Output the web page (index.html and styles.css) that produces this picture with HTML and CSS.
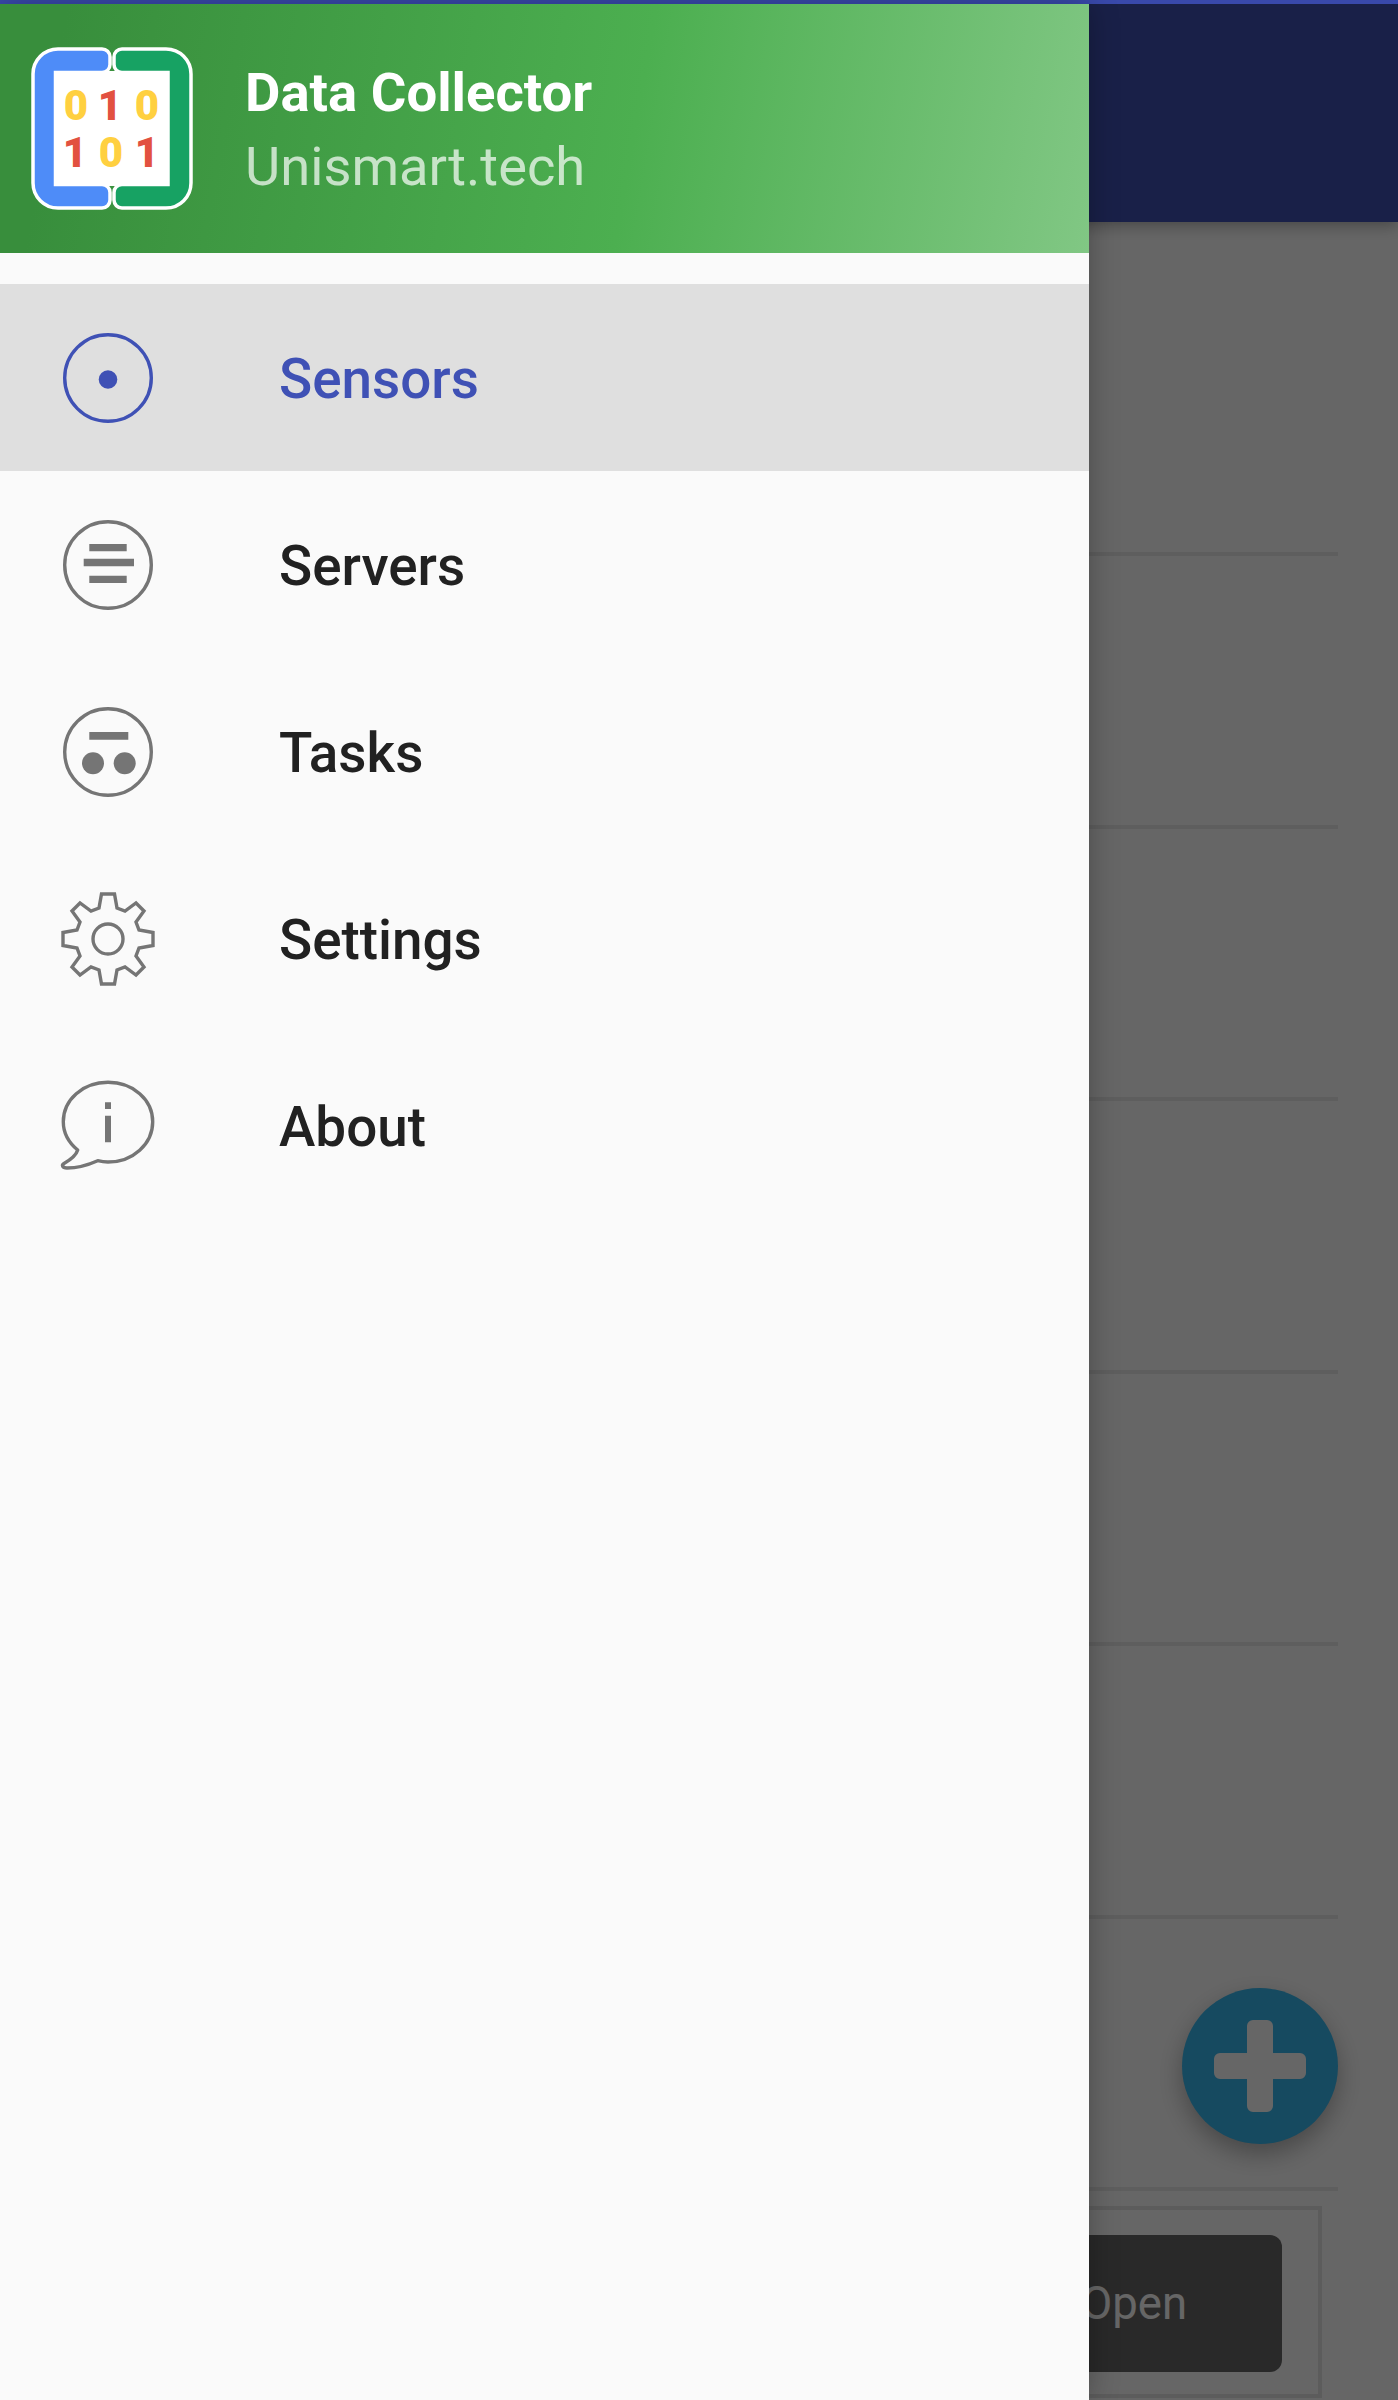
FILE: index.html
```html
<!DOCTYPE html>
<html lang="en">
<head>
<meta charset="utf-8">
<title>Data Collector</title>
<link rel="stylesheet" href="styles.css">
</head>
<body>
<div class="screen">
  <header class="appbar"></header>
  <main class="content">
    <div class="row"></div>
    <div class="row"></div>
    <div class="row"></div>
    <div class="row"></div>
    <div class="row"></div>
    <div class="row"></div>
    <div class="row"></div>
    <div class="bottom-box">
      <div class="open-btn">Open</div>
    </div>
  </main>
  <div class="fab">
    <svg viewBox="0 0 94 94" width="94" height="94"><path d="M34 7a6 6 0 0 1 6-6h14a6 6 0 0 1 6 6v27h27a6 6 0 0 1 6 6v14a6 6 0 0 1-6 6H60v27a6 6 0 0 1-6 6H40a6 6 0 0 1-6-6V60H7a6 6 0 0 1-6-6V40a6 6 0 0 1 6-6h27z" fill="#fff"/></svg>
  </div>
  <div class="scrim"></div>
  <div class="statusbar"></div>
  <aside class="drawer">
    <div class="drawer-head">
      <svg class="logo" viewBox="0 0 162 163" width="162" height="163">
        <path d="M2 27a25 25 0 0 1 25-25H71a8 8 0 0 1 8 8V17.500a8 8 0 0 1-8 8H24.500V137.500H71a8 8 0 0 1 8 8V153a8 8 0 0 1-8 8H27a25 25 0 0 1-25-25Z" fill="#4e8cf8" stroke="#fff" stroke-width="3.500"/>
        <path d="M160 27a25 25 0 0 0-25-25H91a8 8 0 0 0-8 8V17.500a8 8 0 0 0 8 8H137V137.500H91a8 8 0 0 0-8 8V153a8 8 0 0 0 8 8H135a25 25 0 0 0 25-25Z" fill="#17a263" stroke="#fff" stroke-width="3.500"/>
        <rect x="23" y="24" width="115" height="115" rx="2" fill="#fff"/>
        <text class="logo-digit gold" x="45" y="73">0</text>
        <text class="logo-digit red" x="79" y="73">1</text>
        <text class="logo-digit gold" x="116" y="73">0</text>
        <text class="logo-digit red" x="44" y="120">1</text>
        <text class="logo-digit gold" x="80" y="120">0</text>
        <text class="logo-digit red" x="116" y="120">1</text>
      </svg>
      <div class="brand">
        <div class="brand-name">Data Collector</div>
        <div class="brand-site">Unismart.tech</div>
      </div>
    </div>
    <nav class="nav">
      <a class="nav-item is-active">
        <svg class="nav-icon" viewBox="0 0 100 100" width="100" height="100">
          <circle cx="50" cy="50" r="43.300" fill="none" stroke="currentColor" stroke-width="3.400"/>
          <circle cx="50" cy="51.500" r="9.300" fill="currentColor"/>
        </svg>
        <span class="nav-label">Sensors</span>
      </a>
      <a class="nav-item">
        <svg class="nav-icon" viewBox="0 0 100 100" width="100" height="100">
          <circle cx="50" cy="50" r="43.300" fill="none" stroke="currentColor" stroke-width="3.400"/>
          <path d="M31.300 29h37.400v7.300H31.300zM25.700 43.800H76v7.500H25.700zM31.300 60.700h37.400V68H31.300z" fill="currentColor"/>
        </svg>
        <span class="nav-label">Servers</span>
      </a>
      <a class="nav-item">
        <svg class="nav-icon" viewBox="0 0 100 100" width="100" height="100">
          <circle cx="50" cy="50" r="43.300" fill="none" stroke="currentColor" stroke-width="3.400"/>
          <path d="M31.300 30h39v7.700h-39z" fill="currentColor"/>
          <circle cx="35" cy="61.300" r="11" fill="currentColor"/>
          <circle cx="66.700" cy="61.300" r="11" fill="currentColor"/>
        </svg>
        <span class="nav-label">Tasks</span>
      </a>
      <a class="nav-item">
        <svg class="nav-icon" viewBox="0 0 100 100" width="100" height="100">
          <path d="M43.500 5H56.500L59 19L67 22L78 14L86 22L78 33L81 41L95 43.500V56.500L81 59L78 67L86 78L78 86L67 78L59 81L56.500 95H43.500L41 81L33 78L22 86L14 78L22 67L19 59L5 56.500V43.500L19 41L22 33L14 22L22 14L33 22L41 19Z" fill="none" stroke="currentColor" stroke-width="3.400"/>
          <circle cx="50" cy="50" r="15" fill="none" stroke="currentColor" stroke-width="3.400"/>
        </svg>
        <span class="nav-label">Settings</span>
      </a>
      <a class="nav-item">
        <svg class="nav-icon" viewBox="0 0 100 100" width="100" height="100">
          <path d="M19.700 74C10 66 5.300 56 5.300 45.700C5.300 23.500 25 6.300 50 6.300S94.700 23.500 94.700 45.700S75 86 50 86C46 86 43 85.500 39.700 84.700C30 89 18 92 9 92C4 92 3.500 89 6 87.500C12 84 18 80 19.700 74Z" fill="none" stroke="currentColor" stroke-width="3.400" stroke-linejoin="round"/>
          <path d="M47 26.300h6V33h-6zM47 39.700h6v26.600h-6z" fill="currentColor"/>
        </svg>
        <span class="nav-label">About</span>
      </a>
    </nav>
  </aside>
</div>
</body>
</html>
```
FILE: styles.css
```css
* { box-sizing: border-box; }
html, body { margin: 0; padding: 0; }
body { font-family: Roboto, "Noto Sans", sans-serif; background: #fff; }

.screen {
  position: relative;
  width: 1398px;
  height: 2400px;
  overflow: hidden;
  background: #fff;
  padding-top: 4px;
}

.statusbar {
  position: absolute;
  top: 0;
  left: 0;
  right: 0;
  height: 4px;
  background: #3949ab;
}

.appbar {
  height: 218px;
  background: #3f51b5;
  box-shadow: 0 4px 14px rgba(0, 0, 0, .3);
}

.content {
  display: flex;
  flex-direction: column;
  padding: 0 60px 0 0;
}

.row {
  height: 272.500px;
  border-bottom: 4px solid #ebebeb;
  flex: none;
}
.row:first-child { height: 334px; }

.bottom-box {
  margin-top: 15px;
  width: 1322px;
  height: 192px;
  border: 4px solid #e6e6e6;
  flex: none;
  padding: 25px 36px 0 0;
  display: flex;
  justify-content: flex-end;
}

.open-btn {
  width: 296px;
  height: 137px;
  background: #666;
  border-radius: 12px;
  color: #fff;
  font-size: 45.500px;
  line-height: 137px;
  text-align: center;
}

.fab {
  position: absolute;
  left: 1182px;
  top: 1988px;
  width: 156px;
  height: 156px;
  border-radius: 50%;
  background: #37b8ef;
  display: flex;
  align-items: center;
  justify-content: center;
  box-shadow: 0 10px 24px rgba(0, 0, 0, .3);
}

.scrim {
  position: absolute;
  inset: 0;
  background: rgba(0, 0, 0, .6);
}

.drawer {
  position: absolute;
  top: 4px;
  left: 0;
  bottom: 0;
  width: 1089px;
  background: #fafafa;
  box-shadow: 0 0 28px rgba(0, 0, 0, .28);
}

.drawer-head {
  height: 249px;
  display: flex;
  align-items: center;
  padding-left: 31px;
  background: linear-gradient(100deg, #388e3c 6%, #4caf50 58%, #81c784 100%);
}

.logo { flex: none; }

.brand { margin-left: 52px; margin-top: 2px; }
.brand-name {
  font-size: 54.500px;
  line-height: 72px;
  font-weight: 700;
  color: #fff;
}
.brand-site {
  margin-top: 3px;
  font-size: 54.300px;
  line-height: 72px;
  font-weight: 400;
  color: rgba(255, 255, 255, .7);
}

.logo-digit {
  font-family: Roboto, sans-serif;
  font-weight: 900;
  font-size: 42px;
  text-anchor: middle;
}
.gold { fill: #ffd040; }
.red { fill: #e25140; }

.nav { margin-top: 31px; display: flex; flex-direction: column; }

.nav-item {
  height: 187px;
  display: flex;
  align-items: center;
  padding-left: 58px;
  color: #757575;
}
.nav-item.is-active {
  background: #dfdfdf;
  color: #3f51b5;
}
.nav-icon { flex: none; }
.nav-label {
  margin-left: 121px;
  margin-top: 3px;
  font-size: 54.800px;
  font-weight: 500;
  color: #212121;
}
.is-active .nav-label { color: #3f51b5; }
```
